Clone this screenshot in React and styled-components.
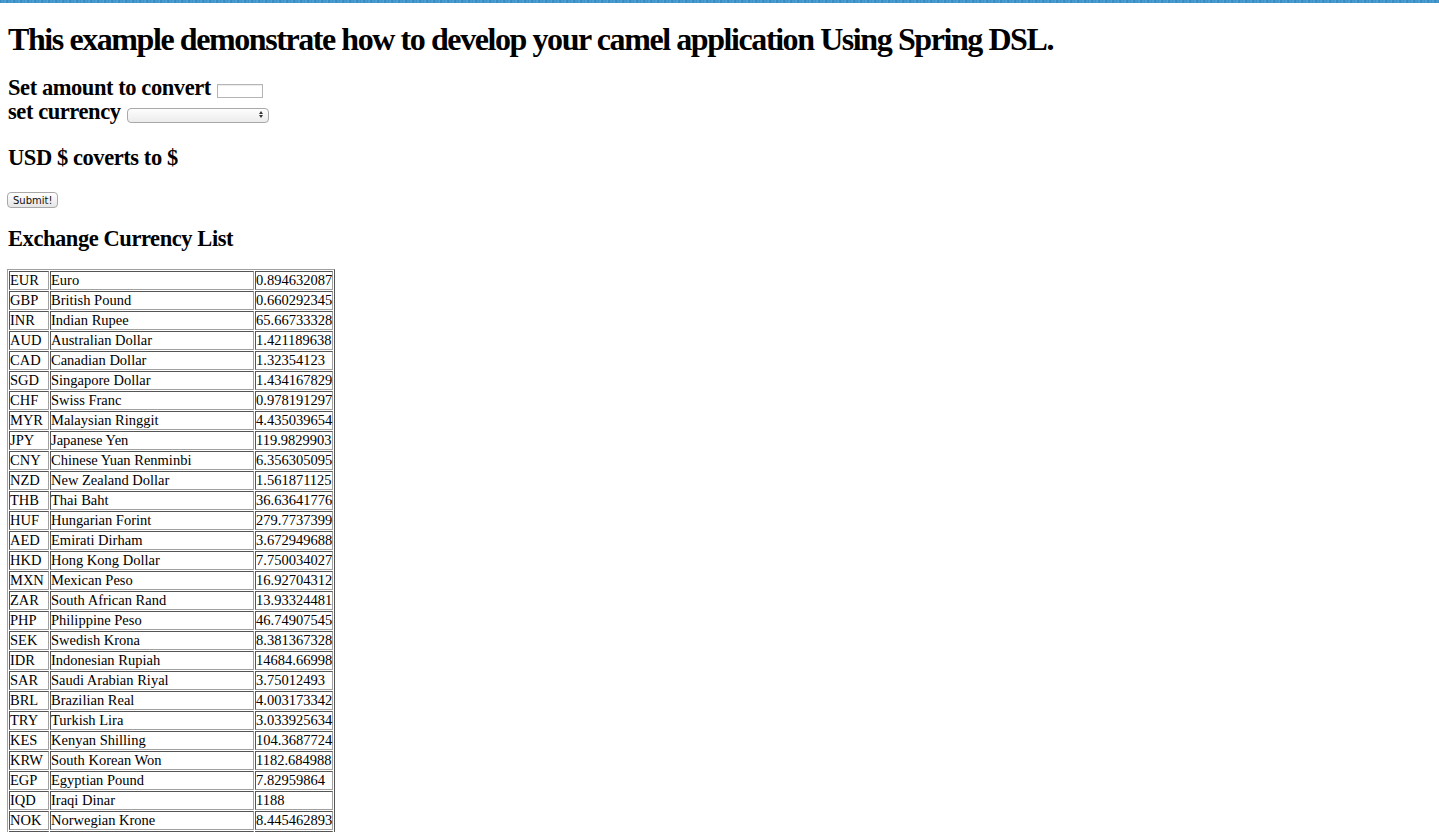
import React from "react";
import styled, { createGlobalStyle } from "styled-components";

const rates = [
  ["EUR", "Euro", "0.894632087"],
  ["GBP", "British Pound", "0.660292345"],
  ["INR", "Indian Rupee", "65.66733328"],
  ["AUD", "Australian Dollar", "1.421189638"],
  ["CAD", "Canadian Dollar", "1.32354123"],
  ["SGD", "Singapore Dollar", "1.434167829"],
  ["CHF", "Swiss Franc", "0.978191297"],
  ["MYR", "Malaysian Ringgit", "4.435039654"],
  ["JPY", "Japanese Yen", "119.9829903"],
  ["CNY", "Chinese Yuan Renminbi", "6.356305095"],
  ["NZD", "New Zealand Dollar", "1.561871125"],
  ["THB", "Thai Baht", "36.63641776"],
  ["HUF", "Hungarian Forint", "279.7737399"],
  ["AED", "Emirati Dirham", "3.672949688"],
  ["HKD", "Hong Kong Dollar", "7.750034027"],
  ["MXN", "Mexican Peso", "16.92704312"],
  ["ZAR", "South African Rand", "13.93324481"],
  ["PHP", "Philippine Peso", "46.74907545"],
  ["SEK", "Swedish Krona", "8.381367328"],
  ["IDR", "Indonesian Rupiah", "14684.66998"],
  ["SAR", "Saudi Arabian Riyal", "3.75012493"],
  ["BRL", "Brazilian Real", "4.003173342"],
  ["TRY", "Turkish Lira", "3.033925634"],
  ["KES", "Kenyan Shilling", "104.3687724"],
  ["KRW", "South Korean Won", "1182.684988"],
  ["EGP", "Egyptian Pound", "7.82959864"],
  ["IQD", "Iraqi Dinar", "1188"],
  ["NOK", "Norwegian Krone", "8.445462893"],
  ["KWD", "Kuwaiti Dinar", "0.302341"],
];

const GlobalStyle = createGlobalStyle`
  html, body {
    margin: 0;
    padding: 0;
    background: #fff;
  }
  body {
    font-family: "Liberation Serif", "Times New Roman", serif;
    color: #000;
  }
`;

const TopStrip = styled.div`
  height: 3px;
  background: repeating-linear-gradient(
    90deg,
    #2f86bf 0px,
    #4a9fd2 2px,
    #3b8ec6 4px,
    #5aa8d8 5px,
    #2f86bf 7px
  );
`;

const Page = styled.div`
  padding: 0 8px 8px 8px;
`;

const Title = styled.h1`
  font-size: 32px;
  font-weight: bold;
  letter-spacing: -1.42px;
  margin: 18px 0 18px 0;
`;

const SubHeading = styled.h3`
  font-size: 22.5px;
  font-weight: bold;
  letter-spacing: -0.43px;
  margin: ${(p) => p.$margin || "18px 0"};
  line-height: ${(p) => p.$lh || "normal"};
`;

const AmountInput = styled.input`
  width: 42px;
  height: 12px;
  padding: 0 1px;
  margin: 0 0 0 1px;
  border: 1px solid #b5b5b5;
  box-shadow: inset 0 1px 1px rgba(0, 0, 0, 0.08);
  vertical-align: 0;
`;

const SelectWrap = styled.span`
  position: relative;
  display: inline-block;
  margin-left: 1px;
  vertical-align: 0;
`;

const CurrencySelect = styled.select`
  display: block;
  appearance: none;
  width: 142px;
  height: 15px;
  border: 1px solid #a9a9a9;
  border-radius: 4px;
  background: linear-gradient(#fdfdfd, #ececec);
  font-size: 10px;
  padding: 0;
`;

const Arrows = styled.span`
  position: absolute;
  right: 6px;
  top: 3px;
  display: flex;
  flex-direction: column;
  gap: 1px;
  pointer-events: none;
`;

const ArrowUp = styled.span`
  width: 0;
  height: 0;
  border-left: 2.5px solid transparent;
  border-right: 2.5px solid transparent;
  border-bottom: 3px solid #333;
`;

const ArrowDown = styled(ArrowUp)`
  border-bottom: none;
  border-top: 3px solid #333;
`;

const SubmitButton = styled.button`
  display: block;
  height: 16px;
  padding: 0 5px;
  margin: 0 0 0 -1px;
  font-family: "DejaVu Sans", "Liberation Sans", sans-serif;
  font-size: 10px;
  color: #111;
  border: 1px solid #a8a8a8;
  border-radius: 4px;
  background: linear-gradient(#ffffff, #e6e6e6);
  line-height: 13px;
`;

const RateTable = styled.table`
  border: 1px solid;
  border-color: #a0a0a0 #555 #555 #a0a0a0;
  border-spacing: 1px;
  font-size: 14.5px;
  margin-left: -1px;
`;

const Cell = styled.td`
  border: 1px solid;
  border-color: #555 #a0a0a0 #a0a0a0 #555;
  padding: 0;
  width: ${(p) => p.$w}px;
  line-height: 17px;
  white-space: nowrap;
`;

export default function App() {
  return (
    <>
      <GlobalStyle />
      <TopStrip />
      <Page>
        <Title>
          This example demonstrate how to develop your camel application Using
          Spring DSL.
        </Title>
        <SubHeading $margin="0" $lh="24px">
          Set amount to convert <AmountInput type="text" />
          <br />
          set currency{" "}
          <SelectWrap>
            <CurrencySelect>
              <option></option>
            </CurrencySelect>
            <Arrows>
              <ArrowUp />
              <ArrowDown />
            </Arrows>
          </SelectWrap>
        </SubHeading>
        <SubHeading $margin="21px 0 21px 0">USD $ coverts to $</SubHeading>
        <SubmitButton>Submit!</SubmitButton>
        <SubHeading $margin="18px 0 17px 0">Exchange Currency List</SubHeading>
        <RateTable>
          <tbody>
            {rates.map(([code, name, rate]) => (
              <tr key={code}>
                <Cell $w={38}>{code}</Cell>
                <Cell $w={202}>{name}</Cell>
                <Cell $w={76}>{rate}</Cell>
              </tr>
            ))}
          </tbody>
        </RateTable>
      </Page>
    </>
  );
}
